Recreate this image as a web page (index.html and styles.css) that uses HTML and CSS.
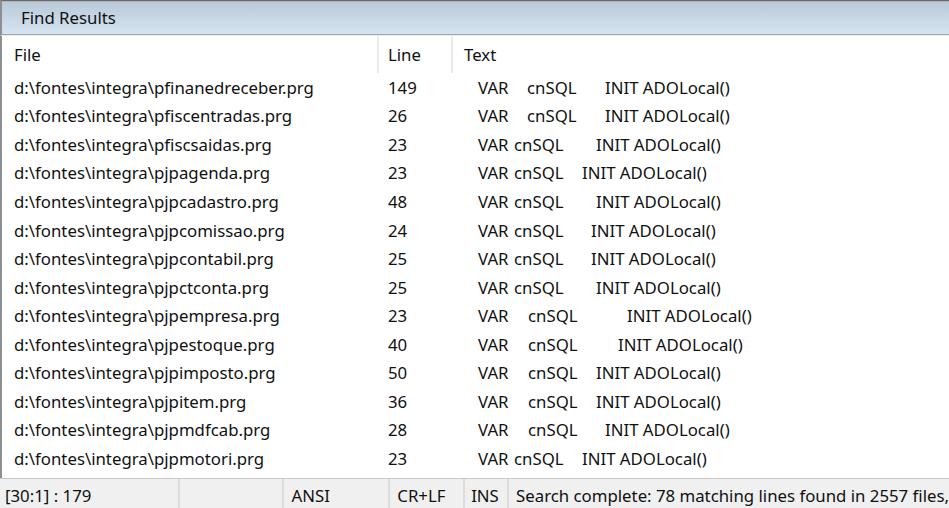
FILE: index.html
```html
<!DOCTYPE html>
<html>
<head>
<meta charset="utf-8">
<link rel="stylesheet" href="styles.css">
</head>
<body>
<div class="app">
  <div class="titlebar"><span class="title">Find Results</span></div>
  <div class="list">
    <div class="head">
      <div class="c-file">File</div>
      <div class="c-line">Line</div>
      <div class="c-text">Text</div>
    </div>
    <div class="rows">
      <div class="row"><div class="c-file">d:\fontes\integra\pfinanedreceber.prg</div><div class="c-line">149</div><div class="c-text"><span class="w" style="width:49px">VAR</span><span class="w" style="width:78px">cnSQL</span><span>INIT ADOLocal()</span></div></div>
      <div class="row"><div class="c-file">d:\fontes\integra\pfiscentradas.prg</div><div class="c-line">26</div><div class="c-text"><span class="w" style="width:49px">VAR</span><span class="w" style="width:78px">cnSQL</span><span>INIT ADOLocal()</span></div></div>
      <div class="row"><div class="c-file">d:\fontes\integra\pfiscsaidas.prg</div><div class="c-line">23</div><div class="c-text"><span class="w" style="width:36px">VAR</span><span class="w" style="width:82px">cnSQL</span><span>INIT ADOLocal()</span></div></div>
      <div class="row"><div class="c-file">d:\fontes\integra\pjpagenda.prg</div><div class="c-line">23</div><div class="c-text"><span class="w" style="width:36px">VAR</span><span class="w" style="width:68px">cnSQL</span><span>INIT ADOLocal()</span></div></div>
      <div class="row"><div class="c-file">d:\fontes\integra\pjpcadastro.prg</div><div class="c-line">48</div><div class="c-text"><span class="w" style="width:36px">VAR</span><span class="w" style="width:82px">cnSQL</span><span>INIT ADOLocal()</span></div></div>
      <div class="row"><div class="c-file">d:\fontes\integra\pjpcomissao.prg</div><div class="c-line">24</div><div class="c-text"><span class="w" style="width:36px">VAR</span><span class="w" style="width:77px">cnSQL</span><span>INIT ADOLocal()</span></div></div>
      <div class="row"><div class="c-file">d:\fontes\integra\pjpcontabil.prg</div><div class="c-line">25</div><div class="c-text"><span class="w" style="width:36px">VAR</span><span class="w" style="width:77px">cnSQL</span><span>INIT ADOLocal()</span></div></div>
      <div class="row"><div class="c-file">d:\fontes\integra\pjpctconta.prg</div><div class="c-line">25</div><div class="c-text"><span class="w" style="width:36px">VAR</span><span class="w" style="width:82px">cnSQL</span><span>INIT ADOLocal()</span></div></div>
      <div class="row"><div class="c-file">d:\fontes\integra\pjpempresa.prg</div><div class="c-line">23</div><div class="c-text"><span class="w" style="width:50px">VAR</span><span class="w" style="width:99px">cnSQL</span><span>INIT ADOLocal()</span></div></div>
      <div class="row"><div class="c-file">d:\fontes\integra\pjpestoque.prg</div><div class="c-line">40</div><div class="c-text"><span class="w" style="width:50px">VAR</span><span class="w" style="width:90px">cnSQL</span><span>INIT ADOLocal()</span></div></div>
      <div class="row"><div class="c-file">d:\fontes\integra\pjpimposto.prg</div><div class="c-line">50</div><div class="c-text"><span class="w" style="width:50px">VAR</span><span class="w" style="width:68px">cnSQL</span><span>INIT ADOLocal()</span></div></div>
      <div class="row"><div class="c-file">d:\fontes\integra\pjpitem.prg</div><div class="c-line">36</div><div class="c-text"><span class="w" style="width:50px">VAR</span><span class="w" style="width:68px">cnSQL</span><span>INIT ADOLocal()</span></div></div>
      <div class="row"><div class="c-file">d:\fontes\integra\pjpmdfcab.prg</div><div class="c-line">28</div><div class="c-text"><span class="w" style="width:50px">VAR</span><span class="w" style="width:77px">cnSQL</span><span>INIT ADOLocal()</span></div></div>
      <div class="row"><div class="c-file">d:\fontes\integra\pjpmotori.prg</div><div class="c-line">23</div><div class="c-text"><span class="w" style="width:36px">VAR</span><span class="w" style="width:68px">cnSQL</span><span>INIT ADOLocal()</span></div></div>
    </div>
  </div>
  <div class="status">
    <div class="seg s1">[30:1] : 179</div>
    <div class="seg s2"></div>
    <div class="seg s3">ANSI</div>
    <div class="seg s4">CR+LF</div>
    <div class="seg s5">INS</div>
    <div class="seg s6">Search complete: 78 matching lines found in 2557 files,</div>
  </div>
</div>
</body>
</html>
```
FILE: styles.css
```css
html, body {
  margin: 0;
  padding: 0;
  width: 949px;
  height: 508px;
  overflow: hidden;
  background: #ffffff;
}
body {
  font-family: "Noto Sans", "Open Sans", sans-serif;
  font-size: 16.8px;
  color: #111111;
}
.app {
  width: 949px;
  height: 508px;
  display: flex;
  flex-direction: column;
}
.titlebar {
  height: 33px;
  border-top: 1px solid #6a6a6a;
  box-shadow: inset 0 1px 0 #a9b4be;
  border-bottom: 1px solid #9aa2aa;
  border-left: 2px solid #8a8f94;
  background: linear-gradient(#b9c9d8, #d6e4f1);
  display: flex;
  align-items: center;
  padding-left: 19px;
}
.title {
  color: #101010;
}
.list {
  flex: 1;
  border-left: 2px solid #8a8f94;
  border-top: 1px solid #eeeeee;
  background: #ffffff;
  display: flex;
  flex-direction: column;
}
.head {
  height: 37px;
  display: flex;
  align-items: stretch;
}
.head > div {
  display: flex;
  align-items: center;
}
.c-file {
  width: 377px;
  padding-left: 12px;
  box-sizing: border-box;
  white-space: nowrap;
}
.c-line {
  width: 74px;
  padding-left: 9px;
  box-sizing: border-box;
}
.c-text {
  flex: 1;
  padding-left: 11px;
  white-space: nowrap;
}
.head .c-file {
  border-right: 2px solid #eaeaea;
}
.head .c-line {
  border-right: 2px solid #eaeaea;
}
.rows {
  display: flex;
  flex-direction: column;
}
.row {
  height: 28.55px;
  display: flex;
  align-items: center;
}
.row .c-text {
  padding-left: 25px;
}
.w {
  display: inline-block;
}
.status {
  height: 29px;
  border-top: 1px solid #c8c8c8;
  background: #f0f0f0;
  display: flex;
  align-items: stretch;
}
.seg {
  display: flex;
  align-items: center;
  box-sizing: border-box;
  border-right: 2px solid #dcdcdc;
  padding-left: 6px;
  padding-top: 4px;
  white-space: nowrap;
}
.s1 { width: 180px; padding-left: 5px; }
.s2 { width: 105px; }
.s3 { width: 106px; padding-left: 7px; }
.s4 { width: 75px; padding-left: 7px; }
.s5 { width: 44px; padding-left: 6px; }
.s6 { flex: 1; border-right: none; padding-left: 7px; }
```
